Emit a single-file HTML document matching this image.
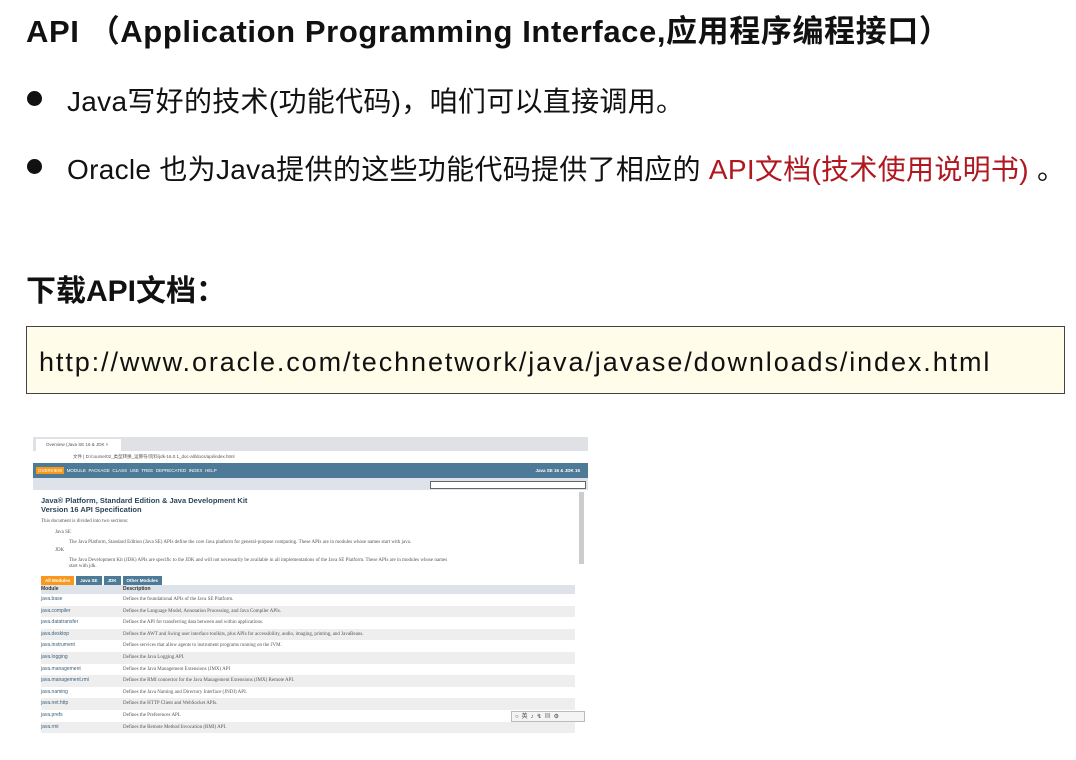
<!DOCTYPE html>
<html><head><meta charset="utf-8"><style>
body{margin:0;width:1076px;height:760px;background:#fff;position:relative;overflow:hidden;font-family:"Liberation Sans","Noto Sans CJK SC",sans-serif;color:#111}
.a{position:absolute;white-space:nowrap}
.t{left:26px;top:6px;font-size:31px;font-weight:bold;letter-spacing:0.6px}
.b{font-size:28px;left:67px;letter-spacing:0.3px}
.dot{position:absolute;width:15px;height:15px;border-radius:50%;background:#111;left:27px}
.box{position:absolute;left:26px;top:326px;width:1037px;height:66px;background:#fffde9;border:1px solid #444}
.s{position:absolute;left:33px;top:437px;width:555px;height:300px;background:#fff;overflow:hidden;font-family:"Liberation Serif",serif;font-size:5px;color:#555}
.row{position:absolute;left:8px;width:534px;height:11.6px;line-height:11.6px}
.row span{position:absolute;left:0;color:#3b5f7a;font-family:"Liberation Sans",sans-serif;font-size:5px}
.row i{position:absolute;left:82px;font-style:normal}
</style></head><body>
<div class="a t">API （Application Programming Interface,应用程序编程接口）</div>
<div class="dot" style="top:91px"></div>
<div class="a b" style="top:80px">Java写好的技术(功能代码)，咱们可以直接调用。</div>
<div class="dot" style="top:159px"></div>
<div class="a b" style="top:148px">Oracle 也为Java提供的这些功能代码提供了相应的 <span style="color:#b0171f">API文档(技术使用说明书)</span> 。</div>
<div class="a" style="left:26px;top:266px;font-size:30px;font-weight:bold">下载API文档：</div>
<div class="box"><div class="a" style="left:12px;top:20px;font-size:27px;letter-spacing:1.9px">http://www.oracle.com/technetwork/java/javase/downloads/index.html</div></div>

<div class="s">
 <div style="position:absolute;left:0;top:0;width:555px;height:14px;background:#dfe1e5"></div>
 <div style="position:absolute;left:3px;top:2px;width:85px;height:12px;background:#fff;font-size:4.5px;line-height:12px;padding-left:10px;box-sizing:border-box;font-family:'Liberation Sans',sans-serif">Overview (Java SE 16 &amp; JDK ×</div>
 <div style="position:absolute;left:0;top:14px;width:555px;height:12px;background:#fff;font-size:4.5px;line-height:12px;padding-left:40px;font-family:'Liberation Sans',sans-serif">文件 | D:/course/02_类型转换_运算符/资料/jdk-16.0.1_doc-all/docs/api/index.html</div>
 <div style="position:absolute;left:0;top:26px;width:555px;height:15px;background:#4d7a97;color:#fff;font-family:'Liberation Sans',sans-serif;font-size:4.5px;line-height:15px">
  <span style="background:#f8981d;padding:1px 2px;margin-left:3px">OVERVIEW</span>&nbsp; MODULE&nbsp; PACKAGE&nbsp; CLASS&nbsp; USE&nbsp; TREE&nbsp; DEPRECATED&nbsp; INDEX&nbsp; HELP
  <b style="position:absolute;right:8px">Java SE 16 &amp; JDK 16</b></div>
 <div style="position:absolute;left:0;top:41px;width:555px;height:12px;background:#dee3e9"></div>
 <div style="position:absolute;left:397px;top:44px;width:154px;height:6px;background:#fff;border:1px solid #666"></div>
 <div style="position:absolute;left:546px;top:55px;width:5px;height:72px;background:#ccc"></div>
 <div class="a" style="left:8px;top:60px;font-family:'Liberation Sans',sans-serif;font-weight:bold;font-size:7.5px;color:#2c4557;line-height:8.5px">Java® Platform, Standard Edition &amp; Java Development Kit<br>Version 16 API Specification</div>
 <div class="a" style="left:8px;top:82px">This document is divided into two sections:</div>
 <div class="a" style="left:22px;top:93px">Java SE</div>
 <div class="a" style="left:36px;top:103px">The Java Platform, Standard Edition (Java SE) APIs define the core Java platform for general-purpose computing. These APIs are in modules whose names start with java.</div>
 <div class="a" style="left:22px;top:111px">JDK</div>
 <div class="a" style="left:36px;top:121px">The Java Development Kit (JDK) APIs are specific to the JDK and will not necessarily be available in all implementations of the Java SE Platform. These APIs are in modules whose names</div>
 <div class="a" style="left:36px;top:127px">start with jdk.</div>
 <div style="position:absolute;left:8px;top:139px;height:9px;font-family:'Liberation Sans',sans-serif;font-size:4.5px;font-weight:bold;color:#fff;line-height:9px">
  <span style="background:#f8981d;padding:0 4px;display:inline-block">All Modules</span><span style="background:#4d7a97;padding:0 4px;margin-left:2px;display:inline-block">Java SE</span><span style="background:#4d7a97;padding:0 4px;margin-left:2px;display:inline-block">JDK</span><span style="background:#4d7a97;padding:0 4px;margin-left:2px;display:inline-block">Other Modules</span></div>
 <div class="row" style="top:148px;height:9px;line-height:9px;background:#dee3e9;font-family:'Liberation Sans',sans-serif;font-weight:bold;color:#333"><span style="color:#333">Module</span><i>Description</i></div>
 <div class="row" style="top:157px"><span>java.base</span><i>Defines the foundational APIs of the Java SE Platform.</i></div>
 <div class="row" style="top:168.6px;background:#eeeeef"><span>java.compiler</span><i>Defines the Language Model, Annotation Processing, and Java Compiler APIs.</i></div>
 <div class="row" style="top:180.2px"><span>java.datatransfer</span><i>Defines the API for transferring data between and within applications.</i></div>
 <div class="row" style="top:191.8px;background:#eeeeef"><span>java.desktop</span><i>Defines the AWT and Swing user interface toolkits, plus APIs for accessibility, audio, imaging, printing, and JavaBeans.</i></div>
 <div class="row" style="top:203.4px"><span>java.instrument</span><i>Defines services that allow agents to instrument programs running on the JVM.</i></div>
 <div class="row" style="top:215px;background:#eeeeef"><span>java.logging</span><i>Defines the Java Logging API.</i></div>
 <div class="row" style="top:226.6px"><span>java.management</span><i>Defines the Java Management Extensions (JMX) API</i></div>
 <div class="row" style="top:238.2px;background:#eeeeef"><span>java.management.rmi</span><i>Defines the RMI connector for the Java Management Extensions (JMX) Remote API.</i></div>
 <div class="row" style="top:249.8px"><span>java.naming</span><i>Defines the Java Naming and Directory Interface (JNDI) API.</i></div>
 <div class="row" style="top:261.4px;background:#eeeeef"><span>java.net.http</span><i>Defines the HTTP Client and WebSocket APIs.</i></div>
 <div class="row" style="top:273px"><span>java.prefs</span><i>Defines the Preferences API.</i></div>
 <div class="row" style="top:284.6px;background:#eeeeef"><span>java.rmi</span><i>Defines the Remote Method Invocation (RMI) API.</i></div>
 <div style="position:absolute;left:478px;top:274px;width:74px;height:11px;background:#f4f4f4;border:1px solid #bbb;font-size:6px;line-height:11px;color:#444;padding-left:3px;box-sizing:border-box;white-space:nowrap;overflow:hidden">○ &nbsp;英 &nbsp;♪ &nbsp;↯ &nbsp;▤ &nbsp;⚙</div>
</div>
</body></html>
